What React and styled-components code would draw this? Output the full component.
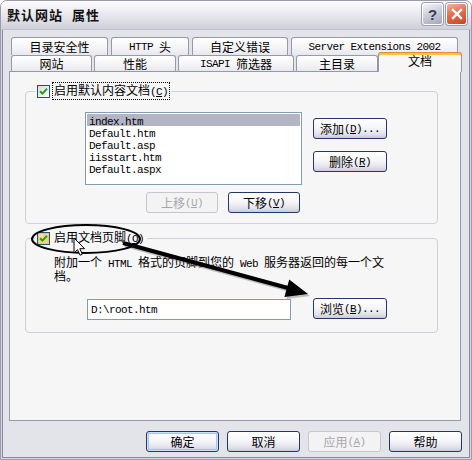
import React from 'react';
import styled, { createGlobalStyle, css } from 'styled-components';

const Global = createGlobalStyle`
  html, body { margin: 0; padding: 0; background: #ffffff; }
  body {
    font-family: "Noto Sans CJK SC", "Liberation Sans", sans-serif;
    font-size: 12px;
    color: #000;
  }
  * { box-sizing: border-box; }
`;

const Window = styled.div`
  position: relative;
  width: 472px;
  height: 460px;
  display: flex;
  flex-direction: column;
  border: 1px solid #9b9bad;
  border-radius: 7px 7px 0 0;
  background: #d6d6e0;
  overflow: hidden;
`;

const TitleBar = styled.div`
  flex: none;
  height: 29px;
  display: flex;
  align-items: center;
  justify-content: space-between;
  padding: 0 4px 0 6px;
  background: linear-gradient(180deg, #fdfdfe 0%, #eeeef3 35%, #dedee6 70%, #cfcfda 100%);
  border-bottom: 1px solid #c2c2ce;
`;

const Title = styled.div`
  font-size: 13px;
  font-weight: bold;
  letter-spacing: 1px;
  word-spacing: 5px;
  color: #111;
  line-height: 14px;
`;

const Caption = styled.div`
  display: flex;
  gap: 3px;
  margin-top: -2px;
`;

const CapButton = styled.div`
  width: 21px;
  height: 22px;
  border: 1px solid #ffffff;
  border-radius: 3px;
  display: flex;
  align-items: center;
  justify-content: center;
  font-family: "Liberation Sans", sans-serif;
  font-weight: bold;
  font-size: 15px;
  box-shadow: 0 0 0 1px #9a9cb0;
  ${p => p.$kind === 'close'
    ? css`
      background: linear-gradient(160deg, #f3b39c 0%, #e2704e 45%, #cb4424 100%);
      color: #fff;
    `
    : css`
      background: linear-gradient(160deg, #f4f5fa 0%, #c9cbda 50%, #a4a7bd 100%);
      color: #3b3d52;
    `}
`;

const Body = styled.div`
  flex: 1;
  margin: 0 1px 1px;
  border: 1px solid #8a8a9e;
  border-top: none;
  background: #e3e3ea;
  padding: 7px 8px 5px 6px;
  display: flex;
  flex-direction: column;
`;

const Tabs = styled.div`
  display: flex;
  flex-direction: column;
`;

const TabRow = styled.div`
  display: flex;
  gap: ${p => (p.$back ? 3 : 2)}px;
  padding-left: 2px;
  height: ${p => (p.$back ? 18 : 16)}px;
  align-items: flex-end;
`;

const Tab = styled.div`
  flex: none;
  width: ${p => p.$w}px;
  height: ${p => (p.$back ? 18 : 16)}px;
  display: flex;
  align-items: center;
  justify-content: center;
  border: 1px solid #959aab;
  border-bottom: none;
  border-radius: 3px 3px 0 0;
  background: linear-gradient(180deg, #ffffff 0%, #f5f5f8 55%, #e7e7ee 100%);
  font-size: 12px;
  line-height: 12px;
  white-space: nowrap;
  ${p => p.$selected && css`
    position: relative;
    z-index: 2;
    height: 20px;
    margin-bottom: -1px;
    margin-left: -2px;
    border-top: none;
    background: #f6f6f6;
    box-shadow: inset 0 1px 0 #e68b2c, inset 0 3px 0 #ffc73c;
    padding-bottom: 3px;
  `}
`;

const L = styled.span`
  font-family: "Liberation Mono", monospace;
  font-size: 11px;
  letter-spacing: -0.6px;
  white-space: pre;
`;

const Page = styled.div`
  flex: none;
  height: 350px;
  border: 1px solid #959aab;
  background: #f6f6f6;
  padding: 12px 0 0 15px;
  display: flex;
  flex-direction: column;
  gap: 7px;
`;

const Group = styled.fieldset`
  margin: 0;
  width: 413px;
  min-width: 0;
  padding: 0 0 0 9px;
  border: 1px solid #d0d0d8;
  border-radius: 4px;
`;

const Legend = styled.legend`
  padding: 0 2px;
  height: 14px;
  display: flex;
  align-items: center;
  gap: 3px;
`;

const CheckBox = styled.span`
  flex: none;
  width: 13px;
  height: 13px;
  border: 1px solid #1c5180;
  display: flex;
  align-items: center;
  justify-content: center;
  ${p => p.$hover
    ? css`
      background: linear-gradient(135deg, #f9e2a6 0%, #f4cc6e 100%);
      box-shadow: inset 0 0 0 1px #f9c75a;
    `
    : css`
      background: linear-gradient(135deg, #dcdcd7 0%, #ffffff 100%);
    `}
`;

const LabelText = styled.span`
  font-size: 12px;
  line-height: 12px;
  padding: 1px 1px;
  white-space: nowrap;
  ${p => p.$focus && css`
    outline: 1px dotted #000;
  `}
`;

const GroupContent = styled.div`
  padding: ${p => p.$pad};
  display: flex;
  flex-direction: column;
`;

const ListRow = styled.div`
  display: flex;
  gap: 11px;
  align-items: flex-start;
`;

const ListBox = styled.div`
  width: 217px;
  height: 73px;
  border: 1px solid #7f9db9;
  background: #ffffff;
  padding: 1px;
  display: flex;
  flex-direction: column;
`;

const ListItem = styled.div`
  height: 12px;
  line-height: 12px;
  padding-left: 2px;
  ${p => p.$selected && css`
    background: #b4b5c4;
  `}
`;

const ButtonColumn = styled.div`
  display: flex;
  flex-direction: column;
  gap: 12px;
  margin-top: 6px;
`;

const MoveRow = styled.div`
  width: 217px;
  display: flex;
  justify-content: flex-end;
  gap: 10px;
  padding-right: 2px;
  margin-top: 7px;
`;

const Button = styled.div`
  flex: none;
  width: ${p => p.$w || 74}px;
  height: 21px;
  border: 1px solid ${p => (p.$disabled ? '#c6c6cc' : '#22386a')};
  border-radius: 3px;
  display: flex;
  align-items: center;
  justify-content: center;
  font-size: 12px;
  line-height: 12px;
  white-space: nowrap;
  color: ${p => (p.$disabled ? '#a7a7ad' : '#000')};
  background: ${p => (p.$disabled
    ? '#f3f3f3'
    : 'linear-gradient(180deg, #ffffff 0%, #f6f6f9 45%, #e2e2ec 80%, #c9c9da 100%)')};
  ${p => p.$default && css`
    box-shadow: inset 0 0 0 1px #cee0f9, inset 0 0 0 2px #a9c4ee;
  `}
`;

const Description = styled.div`
  font-size: 12px;
  line-height: 12px;
`;

const InputRow = styled.div`
  display: flex;
  align-items: flex-start;
  margin-top: 16px;
`;

const TextInput = styled.div`
  width: 204px;
  height: 21px;
  margin: 1px 22px 0 33px;
  border: 1px solid #7f9db9;
  background: #ffffff;
  display: flex;
  align-items: center;
  padding-left: 3px;
`;

const Footer = styled.div`
  display: flex;
  justify-content: flex-end;
  gap: 8px;
  margin-top: 10px;
  margin-right: -1px;
`;

const Overlay = styled.svg`
  position: absolute;
  top: -1px;
  left: -1px;
  width: 472px;
  height: 460px;
  pointer-events: none;
  z-index: 10;
`;

const Check = () => (
  <svg width="9" height="9" viewBox="0 0 9 9">
    <path d="M1 4.2 L3.4 6.6 L8 1.8" fill="none" stroke="#21a121" strokeWidth="2" />
  </svg>
);

const Acc = ({ k }) => (
  <L>(<u>{k}</u>)</L>
);

export default function App() {
  return (
    <>
      <Global />
      <Window>
        <TitleBar>
          <Title>默认网站 属性</Title>
          <Caption>
            <CapButton $kind="help">?</CapButton>
            <CapButton $kind="close">
              <svg width="12" height="12" viewBox="0 0 12 12">
                <path d="M2 2 L10 10 M10 2 L2 10" stroke="#fff" strokeWidth="2.4" strokeLinecap="square" />
              </svg>
            </CapButton>
          </Caption>
        </TitleBar>
        <Body>
          <Tabs>
            <TabRow $back>
              <Tab $back $w={97}>目录安全性</Tab>
              <Tab $back $w={78}><L>HTTP </L>头</Tab>
              <Tab $back $w={96}>自定义错误</Tab>
              <Tab $back $w={167}><L>Server Extensions 2002</L></Tab>
            </TabRow>
            <TabRow>
              <Tab $w={81}>网站</Tab>
              <Tab $w={82}>性能</Tab>
              <Tab $w={116}><L>ISAPI </L>筛选器</Tab>
              <Tab $w={82}>主目录</Tab>
              <Tab $w={84} $selected>文档</Tab>
            </TabRow>
          </Tabs>
          <Page>
            <Group>
              <Legend>
                <CheckBox><Check /></CheckBox>
                <LabelText $focus>启用默认内容文档<Acc k="C" /></LabelText>
              </Legend>
              <GroupContent $pad="14px 0 10px 50px">
                <ListRow>
                  <ListBox>
                    <ListItem $selected><L>index.htm</L></ListItem>
                    <ListItem><L>Default.htm</L></ListItem>
                    <ListItem><L>Default.asp</L></ListItem>
                    <ListItem><L>iisstart.htm</L></ListItem>
                    <ListItem><L>Default.aspx</L></ListItem>
                  </ListBox>
                  <ButtonColumn>
                    <Button>添加<Acc k="D" /><L>...</L></Button>
                    <Button>删除<Acc k="R" /></Button>
                  </ButtonColumn>
                </ListRow>
                <MoveRow>
                  <Button $w={72} $disabled>上移<Acc k="U" /></Button>
                  <Button $w={72}>下移<Acc k="V" /></Button>
                </MoveRow>
              </GroupContent>
            </Group>
            <Group>
              <Legend>
                <CheckBox $hover><Check /></CheckBox>
                <LabelText>启用文档页脚<Acc k="O" /></LabelText>
              </Legend>
              <GroupContent $pad="11px 0 12px 19px">
                <Description>
                  附加一个<L> HTML </L>格式的页脚到您的<L> Web </L>服务器返回的每一个文
                  <br />
                  档。
                </Description>
                <InputRow>
                  <TextInput><L>D:\root.htm</L></TextInput>
                  <Button>浏览<Acc k="B" /><L>...</L></Button>
                </InputRow>
              </GroupContent>
            </Group>
          </Page>
          <Footer>
            <Button $w={73} $default>确定</Button>
            <Button $w={73}>取消</Button>
            <Button $w={73} $disabled>应用<Acc k="A" /></Button>
            <Button $w={73}>帮助</Button>
          </Footer>
        </Body>
        <Overlay viewBox="0 0 472 460">
          <g opacity="0.35" transform="translate(2 2)">
            <line x1="123" y1="243" x2="288" y2="288" stroke="#555" strokeWidth="4" />
            <polygon points="308,294 284.4,297 289.2,279.5" fill="#555" />
          </g>
          <ellipse cx="86" cy="239" rx="54" ry="14" fill="none" stroke="#000" strokeWidth="2" />
          <line x1="123" y1="243" x2="288" y2="288" stroke="#000" strokeWidth="4" />
          <polygon points="308,294 284.4,297 289.2,279.5" fill="#000" />
          <path
            d="M74 238 L74 253 L77.5 249.6 L80 255.2 L82.3 254.2 L79.8 248.7 L84.6 248.7 Z"
            fill="#fff"
            stroke="#000"
            strokeWidth="1"
            strokeLinejoin="round"
          />
        </Overlay>
      </Window>
    </>
  );
}
